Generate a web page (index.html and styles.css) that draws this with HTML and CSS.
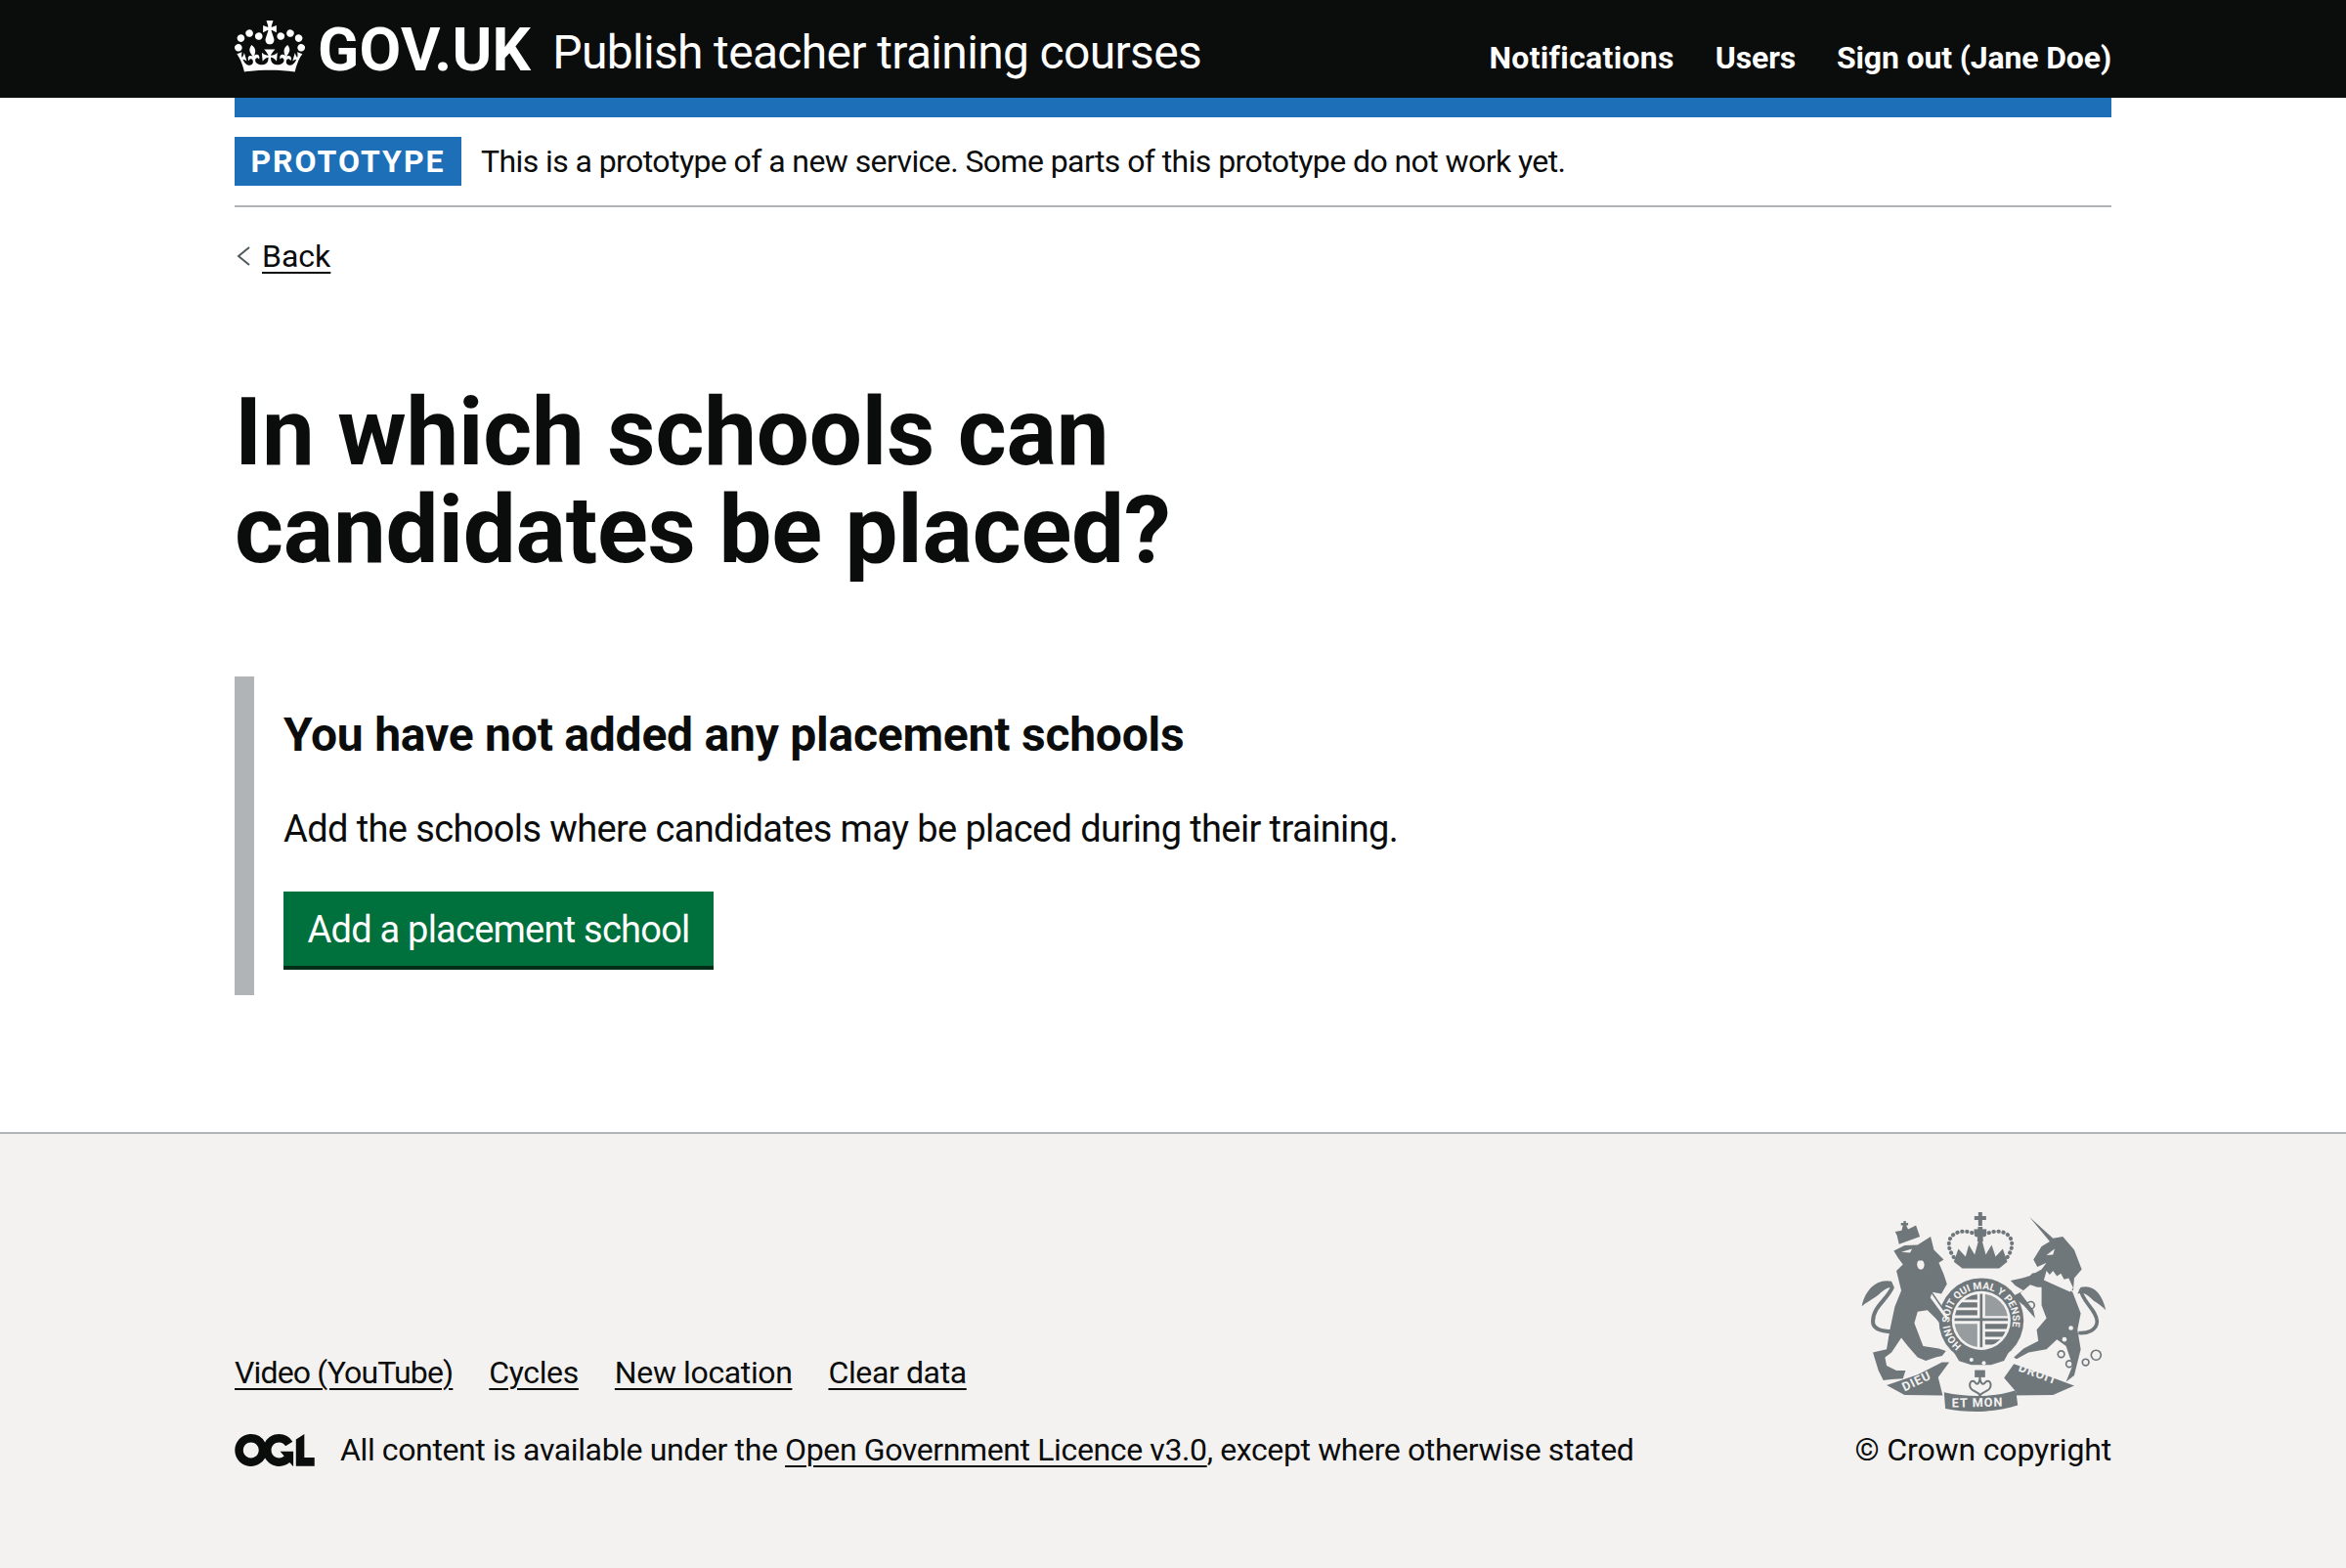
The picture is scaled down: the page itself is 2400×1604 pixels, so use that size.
FILE: index.html
```html
<!DOCTYPE html>
<html lang="en">
<head>
<meta charset="utf-8">
<title>In which schools can candidates be placed?</title>
<link rel="stylesheet" href="styles.css">
</head>
<body>
<header class="header">
  <div class="container header-inner">
    <a class="logo" href="#">
      <svg class="crown" viewBox="0 0 132 97" aria-hidden="true"><path fill="#fff" d="M25 30.2c3.5 1.5 7.7-.2 9.1-3.7 1.5-3.6-.2-7.8-3.9-9.2-3.6-1.4-7.6.3-9.1 3.9-1.4 3.5.3 7.5 3.9 9zM9 39.5c3.6 1.5 7.8-.2 9.2-3.7 1.5-3.6-.2-7.8-3.9-9.1-3.6-1.5-7.6.2-9.1 3.8-1.4 3.5.3 7.5 3.8 9zM4.4 57.2c3.5 1.5 7.7-.2 9.1-3.8 1.5-3.6-.2-7.7-3.9-9.1-3.5-1.5-7.6.3-9.1 3.8-1.4 3.5.3 7.6 3.9 9.1zm38.3-21.4c3.5 1.5 7.7-.2 9.1-3.8 1.5-3.6-.2-7.7-3.9-9.1-3.6-1.5-7.6.3-9.1 3.8-1.3 3.6.4 7.7 3.9 9.1zm64.4-5.6c-3.6 1.5-7.8-.2-9.1-3.7-1.5-3.6.2-7.8 3.8-9.2 3.6-1.4 7.7.3 9.2 3.9 1.3 3.5-.4 7.5-3.9 9zm15.9 9.3c-3.6 1.5-7.7-.2-9.1-3.7-1.5-3.6.2-7.8 3.7-9.1 3.6-1.5 7.7.2 9.2 3.8 1.5 3.5-.3 7.5-3.8 9zm4.7 17.7c-3.6 1.5-7.8-.2-9.2-3.8-1.5-3.6.2-7.7 3.9-9.1 3.6-1.5 7.7.3 9.2 3.8 1.3 3.5-.4 7.6-3.9 9.1zM89.3 35.8c-3.6 1.5-7.8-.2-9.2-3.8-1.4-3.6.2-7.7 3.9-9.1 3.6-1.5 7.7.3 9.2 3.8 1.4 3.6-.3 7.7-3.9 9.1zM69.7 17.7l8.9 4.7V9.3l-8.9 2.8c-.2-.3-.5-.6-.9-.9L72.4 0H59.6l3.5 11.2c-.3.3-.6.5-.9.9l-8.8-2.8v13.1l8.8-4.7c.3.3.6.7.9.9l-5 15.4v.1c-.2.8-.4 1.6-.4 2.4 0 4.1 3.1 7.5 7 8.1h.2c.3 0 .7.1 1 .1.4 0 .7 0 1-.1h.2c4-.6 7.1-4.1 7.1-8.1 0-.8-.1-1.7-.4-2.4V34l-5.1-15.4c.4-.2.7-.6 1-.9zM66 92.8c16.9 0 32.8 1.1 47.1 3.2 4-16.9 8.9-26.7 14-33.5l-9.6-3.4c1 4.9 1.1 7.2 0 10.2-1.5-1.4-3-4.3-4.2-8.7L108.6 76c2.8-2 5-3.2 7.5-3.3-4.4 9.4-10 11.9-13.6 11.2-4.3-.8-6.3-4.6-5.6-7.9 1-4.7 5.7-5.9 8-.5 4.3-8.7-3-11.4-7.6-8.8 7.1-7.2 7.9-13.5 2.1-21.1-8 6.1-8.1 12.3-4.5 20.8-4.7-5.4-12.1-2.5-9.5 6.2 3.4-5.2 7.9-2 7.2 3.1-.6 4.3-6.4 7.8-13.5 7.2-10.3-.9-10.9-8-11.2-13.8 2.5-.5 7.1 1.8 11 7.3L80.2 60c-4.1 4.4-8 5.3-12.3 5.4 1.4-4.4 8-11.6 8-11.6H55.5s6.4 7.2 7.9 11.6c-4.2-.1-8-1-12.3-5.4l1.4 16.4c3.9-5.5 8.5-7.7 10.9-7.3-.3 5.8-.9 12.8-11.1 13.8-7.2.6-12.9-2.9-13.5-7.2-.7-5 3.8-8.3 7.1-3.1 2.7-8.7-4.6-11.6-9.4-6.2 3.7-8.5 3.6-14.7-4.6-20.8-5.8 7.6-5 13.9 2.2 21.1-4.7-2.6-11.9.1-7.7 8.8 2.3-5.5 7.1-4.2 8.1.5.7 3.3-1.3 7.1-5.7 7.9-3.5.7-9-1.8-13.5-11.2 2.5.1 4.7 1.3 7.5 3.3l-4.7-15.4c-1.2 4.4-2.7 7.2-4.3 8.7-1.1-3-.9-5.3 0-10.2l-9.5 3.4c5 6.9 9.9 16.7 14 33.5 14.8-2.1 30.8-3.2 47.7-3.2z"/></svg>
      <span class="logo-text">GOV.UK</span>
    </a>
    <a class="product" href="#">Publish teacher training courses</a>
    <nav class="nav">
      <a class="nav-first" href="#">Notifications</a>
      <a href="#">Users</a>
      <a href="#">Sign out (Jane Doe)</a>
    </nav>
  </div>
</header>
<div class="container">
  <div class="blue-bar"></div>
  <div class="phase">
    <strong class="tag">PROTOTYPE</strong>
    <span>This is a prototype of a new service. Some parts of this prototype do not work yet.</span>
  </div>
  <a class="back" href="#">
    <svg class="chev" viewBox="0 0 14 20" aria-hidden="true"><path d="M13 1 L2 10 L13 19" fill="none" stroke="#505a5f" stroke-width="2"/></svg>
    <span class="back-text">Back</span>
  </a>
  <main class="main">
    <h1 class="title">In which schools can candidates be placed?</h1>
    <div class="inset">
      <h2 class="inset-title">You have not added any placement schools</h2>
      <p class="inset-body">Add the schools where candidates may be placed during their training.</p>
      <a class="button" href="#">Add a placement school</a>
    </div>
  </main>
</div>
<footer class="footer">
  <div class="container footer-inner">
    <div class="meta">
      <ul class="foot-links">
        <li class="foot-first"><a href="#">Video (YouTube)</a></li>
        <li><a href="#">Cycles</a></li>
        <li><a href="#">New location</a></li>
        <li><a href="#">Clear data</a></li>
      </ul>
      <div class="licence">
        <svg class="ogl" viewBox="0 0 483.2 195.7" aria-hidden="true"><path fill="#0b0c0c" d="M421.5 142.8V.1l-50.7 32.3v161.1h112.4v-50.7zm-122.3-9.6A47.12 47.12 0 0 1 221 97.8c0-26 21.1-47.1 47.1-47.1 16.7 0 31.4 8.7 39.7 21.8l42.7-27.2A97.63 97.63 0 0 0 268.1 0c-36.5 0-68.3 20.1-85.1 49.7A98 98 0 0 0 97.8 0C43.9 0 0 43.9 0 97.8s43.9 97.8 97.8 97.8c36.5 0 68.3-20.1 85.1-49.7a97.76 97.76 0 0 0 149.6 25.4l19.4 22.2h3v-87.8h-80l24.3 27.5zM97.8 145c-26 0-47.1-21.1-47.1-47.1s21.1-47.1 47.1-47.1 47.2 21 47.2 47S123.8 145 97.8 145"/></svg>
        <span>All content is available under the <a href="#">Open Government Licence v3.0</a>, except where otherwise stated</span>
      </div>
    </div>
    <div class="copyright">
      <svg class="crest" viewBox="60 60 770 620" aria-hidden="true">
        <defs>
          <path id="garter" d="M384 472 A97 97 0 1 1 496 472"/>
          <clipPath id="shield"><circle cx="440" cy="392" r="82"/></clipPath>
        </defs>
        <g fill="#6f777b">
          <!-- lion crown -->
          <path d="M188 158 L182 132 L176 120 L196 116 L200 100 L194 100 L194 93 L202 93 L202 87 L209 87 L209 93 L216 93 L216 100 L210 100 L216 112 L240 100 L252 135 Z"/>
          <!-- lion -->
          <path d="M172 178 L205 162 L245 160 L285 135 L295 175 L325 205 L310 215 L325 250 L335 280 L318 310 L290 305 L335 370 L347 405 L325 415 L300 385 L275 360 L245 365 L235 400 L262 470 L310 478 L332 485 L320 500 L300 505 L270 515 L245 505 L215 470 L195 445 L165 490 L145 505 L150 530 L180 545 L208 545 L200 570 L165 572 L140 575 L125 545 L108 490 L150 480 L160 420 L175 350 L195 300 L180 240 L200 220 L185 200 Z"/>
          <!-- lion tail tuft -->
          <path d="M74 348 C84 300 118 262 165 272 L174 292 C150 284 132 308 116 320 C104 328 90 336 74 348 Z"/>
          <!-- unicorn head and mane -->
          <path d="M588 75 L660 140 L690 135 L725 175 L748 235 L725 262 L722 300 L665 265 L640 290 L612 290 L590 282 L560 308 L600 360 L605 385 L570 345 L535 318 L570 300 L545 285 L530 270 L565 262 L590 255 L625 235 L640 215 L612 228 L600 205 L625 165 L650 150 Z"/>
          <!-- unicorn body -->
          <path d="M625 270 L690 285 L720 305 L745 370 L735 420 L745 480 L725 560 L700 580 L720 530 L700 470 L672 450 L640 480 L585 490 L548 510 L540 505 L570 478 L615 455 L610 420 L640 385 L625 345 Z"/>
          <!-- unicorn tail tuft -->
          <path d="M822 360 C810 310 785 280 745 290 L735 310 C760 300 775 325 790 335 C800 342 812 350 822 360 Z"/>
          <!-- royal crown -->
          <path d="M356 212 L370 172 L392 196 L402 160 L420 190 L432 145 L442 145 L454 190 L472 160 L484 196 L506 172 L520 212 L495 232 L382 232 Z"/>
          <path d="M428 150 L430 105 L444 105 L446 150 Z"/>
          <path d="M431 60 H443 V72 H455 V84 H443 V102 H431 V84 H419 V72 H431 Z"/>
          <path d="M418 112 H456 V126 H418 Z"/>
          <!-- motto ribbons -->
          <path d="M150 590 L245 558 L320 520 L342 520 L308 566 L322 622 L205 620 Z"/>
          <path d="M725 592 L640 560 L540 525 L510 568 L548 612 L532 622 L660 620 Z"/>
          <path d="M326 612 C400 628 478 628 546 606 L552 652 C480 675 398 675 330 662 Z"/>
          <path d="M420 544 H452 V566 H420 Z"/>
          <!-- garter -->
          <circle cx="440" cy="392" r="130"/>
          <path d="M352 482 L372 516 L410 528 L470 528 L510 515 L528 482 Z"/>
        </g>
        <!-- tails, crown arches, jewels -->
        <g fill="none" stroke="#6f777b">
          <path stroke-width="12" d="M168 290 C150 330 108 350 108 395 C108 422 140 426 168 426"/>
          <path stroke-width="11" d="M745 296 C745 330 795 360 795 395 C795 422 765 432 738 430"/>
          <path stroke-width="12" stroke-dasharray="1 14" stroke-linecap="round" d="M356 198 C322 150 350 112 400 120 C412 122 424 128 432 134 M520 198 C552 150 526 112 476 120 C464 122 450 128 442 134"/>
          <path stroke-width="6" d="M408 600 C400 585 410 572 420 580 C425 590 436 590 436 562 C436 590 448 590 454 580 C464 572 474 585 466 600 C458 612 444 608 436 622 C430 608 416 612 408 600 Z"/>
          <circle stroke-width="5" cx="685" cy="495" r="10"/><circle stroke-width="5" cx="710" cy="525" r="10"/><circle stroke-width="5" cx="760" cy="520" r="10"/><circle stroke-width="5" cx="792" cy="498" r="15"/>
          <circle stroke-width="5" cx="603" cy="260" r="11"/><circle stroke-width="5" cx="592" cy="345" r="11"/><circle stroke-width="5" cx="725" cy="370" r="11"/>
        </g>
        <!-- lit details -->
        <g fill="#f3f2f1">
          <path d="M364 250 C400 232 476 232 510 250 C490 264 390 264 364 250 Z"/>
          <circle cx="440" cy="392" r="90"/>
          <path d="M632 268 L640 240 L650 252 L660 240 L672 256 L684 248 L694 266 L708 262 L722 292 L712 304 Z"/>
          <path d="M248 208 C240 214 242 234 255 236 C268 234 268 214 260 208 Z"/>
          <path d="M288 310 L340 385 L335 392 L284 322 Z"/>
          <circle cx="410" cy="512" r="6"/><circle cx="448" cy="522" r="6"/><circle cx="715" cy="415" r="7"/><circle cx="695" cy="450" r="7"/>
          <path d="M195 182 L228 172 L222 184 Z"/>
          <path d="M640 192 L665 172 L660 190 Z"/>
        </g>
        <!-- shield quarters -->
        <g fill="#6f777b" clip-path="url(#shield)">
          <path d="M436 300 H444 V480 H436 Z"/>
          <path d="M350 385 H530 V393 H350 Z"/>
          <path d="M355 312 H428 V328 H355 Z M355 336 H428 V352 H355 Z M355 360 H428 V376 H355 Z"/>
          <path d="M452 300 H525 V378 H452 Z M355 402 H428 V480 H355 Z" opacity=".7"/>
          <path d="M452 402 H525 V418 H452 Z M452 426 H525 V442 H452 Z M452 450 H525 V466 H452 Z"/>
        </g>
        <text class="crest-motto" fill="#f3f2f1" font-size="31"><textPath href="#garter" startOffset="1%">HONI SOIT QUI MAL Y PENSE</textPath></text>
        <g class="crest-motto crest-ribbon" fill="#f3f2f1">
          <text x="205" y="610" transform="rotate(-26 205 610)">DIEU</text>
          <text x="350" y="658" transform="rotate(-1 350 658)">ET MON</text>
          <text x="552" y="546" transform="rotate(20 552 546)">DROIT</text>
        </g>
      </svg>
      <span class="copy-text">© Crown copyright</span>
    </div>
  </div>
</footer>
</body>
</html>
```
FILE: styles.css
```css
* { box-sizing: border-box; }
html, body { margin: 0; padding: 0; }
body {
  min-height: 1604px;
  display: flex;
  flex-direction: column;
  background: #fff;
  color: #0b0c0c;
  font-family: Roboto, sans-serif;
  font-size: 38px;
  line-height: 50px;
}
a { color: inherit; }
.container { width: 1920px; margin: 0 auto; }

.header { background: #0b0c0c; height: 100px; color: #fff; flex: none; }
.header-inner { display: flex; align-items: flex-start; height: 100px; }
.header a { text-decoration: none; }
.logo { display: flex; align-items: flex-start; }
.crown { width: 72px; height: 53px; margin-top: 21px; flex: none; }
.logo-text { font-size: 62px; font-weight: 700; line-height: 70px; margin: 16px 0 0 13px; letter-spacing: .3px; }
.product { font-size: 48px; line-height: 60px; margin: 24px 0 0 22px; letter-spacing: -.67px; }
.nav { margin-left: auto; display: flex; gap: 42px; font-size: 32px; font-weight: 700; line-height: 40px; margin-top: 39px; letter-spacing: -.15px; }
.nav-first { letter-spacing: .3px; }

.blue-bar { height: 20px; background: #1d70b8; }
.phase { display: flex; align-items: center; gap: 20px; padding: 20px 0; border-bottom: 2px solid #b1b4b6; height: 92px; font-size: 32px; line-height: 50px; letter-spacing: -.58px; }
.tag { background: #1d70b8; color: #fff; height: 50px; width: 232px; font-size: 32px; line-height: 50px; text-align: center; font-weight: 700; letter-spacing: 2px; flex: none; }

.back { display: flex; align-items: center; margin-top: 30px; font-size: 32px; line-height: 40px; width: 100px; text-decoration: none; }
.chev { width: 14px; height: 20px; margin: 0 12px 0 2px; flex: none; }
.back-text { text-decoration: underline; text-decoration-thickness: 2px; text-underline-offset: 5px; }

.main { padding-top: 110px; padding-bottom: 140px; }
.title { margin: 0 0 100px; width: 1100px; font-size: 96px; line-height: 100px; font-weight: 700; letter-spacing: -.2px; }
.inset { border-left: 20px solid #b1b4b6; padding: 30px; height: 326px; }
.inset-title { margin: 0 0 41px; font-size: 48px; line-height: 60px; font-weight: 700; letter-spacing: -.23px; }
.inset-body { margin: 0 0 39px; font-size: 38px; line-height: 50px; letter-spacing: -.61px; }
.button { display: inline-block; background: #00703c; box-shadow: 0 4px 0 #002d18; color: #fff; text-decoration: none; width: 440px; height: 76px; line-height: 78px; text-align: center; font-size: 38px; letter-spacing: -.76px; }

.footer { flex: 1; background: #f3f2f1; border-top: 2px solid #b1b4b6; font-size: 32px; line-height: 40px; letter-spacing: -.38px; }
.footer-inner { display: flex; justify-content: space-between; align-items: flex-end; padding-top: 80px; }
.footer a { text-decoration-thickness: 2px; text-underline-offset: 5px; }
.meta { flex: 1; }
.foot-links { list-style: none; margin: 0 0 39px; padding: 0; display: flex; gap: 37px; }
.foot-first { letter-spacing: -.85px; }
.licence { display: flex; align-items: center; gap: 26px; }
.ogl { width: 82px; height: 33px; flex: none; }
.copyright { display: flex; flex-direction: column; align-items: flex-end; gap: 16px; }
.crest { width: 257px; height: 207px; display: block; margin-right: 3px; }
.crest-motto { font-family: Roboto, sans-serif; font-weight: 700; letter-spacing: 0; }
.crest-ribbon { font-size: 38px; letter-spacing: 3px; }
.copy-text { letter-spacing: -.15px; }
```
